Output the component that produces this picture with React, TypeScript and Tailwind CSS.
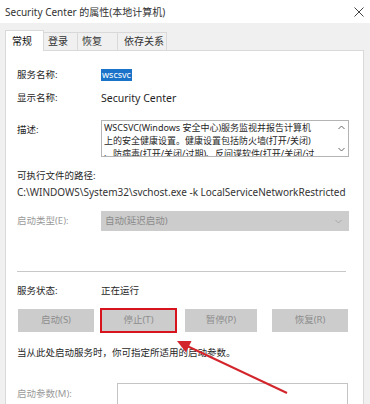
export default function App() {
  return (
    <div className="relative w-[370px] h-[404px] overflow-hidden bg-[#f0f0f0] text-[#1f1f1f] text-[9.5px] font-['Noto_Sans','Noto_Sans_CJK_SC',sans-serif]">
      {/* title bar */}
      <div className="h-[23px] bg-white flex items-center justify-between pl-[5px] pr-[5px]">
        <span className="text-[10px] text-[#333] leading-[14px]">Security Center 的属性(本地计算机)</span>
        <svg width="10" height="10" viewBox="0 0 10 10" className="mr-[1px]">
          <path d="M0.5 0.5 L9.5 9.5 M9.5 0.5 L0.5 9.5" stroke="#444" strokeWidth="1" />
        </svg>
      </div>

      {/* tabs */}
      <div className="flex items-end pl-[5px] pt-[7px]">
        <div className="relative z-10 -mb-px h-[21px] w-[39px] bg-white border border-b-0 border-[#d9d9d9] flex items-center pl-[6px] text-[#111] text-[10px]">常规</div>
        <div className="h-[18px] w-[34px] border-t border-r border-[#d9d9d9] flex items-center pl-[4px] text-[#333] text-[10px]">登录</div>
        <div className="h-[18px] w-[40px] border-t border-r border-[#d9d9d9] flex items-center pl-[4px] text-[#333] text-[10px]">恢复</div>
        <div className="h-[18px] w-[49px] border-t border-r border-[#d9d9d9] flex items-center pl-[6px] text-[#333] text-[10px]">依存关系</div>
      </div>

      {/* panel */}
      <div className="ml-[5px] mr-[6px] h-[400px] bg-white border border-[#d9d9d9] pl-[11px] flex flex-col">
        <div className="mt-[17px] h-[14px] flex items-center leading-[14px]">
          <span className="w-[84px]">服务名称:</span>
          <span className="bg-[#1a73c9] text-white px-[1px] leading-[12px] text-[9px]">wscsvc</span>
        </div>
        <div className="mt-[9px] h-[14px] flex items-center leading-[14px]">
          <span className="w-[84px]">显示名称:</span>
          <span className="text-[10.5px]">Security Center</span>
        </div>
        <div className="mt-[15px] flex">
          <span className="w-[84px] pt-[3px] leading-[14px]">描述:</span>
          <div className="w-[248px] h-[37px] border border-[#b4b4b4] flex overflow-hidden">
            <div className="flex-1 overflow-hidden pl-[2px] leading-[13px] text-[9px] whitespace-nowrap">
              <div>WSCSVC(Windows 安全中心)服务监视并报告计算机</div>
              <div>上的安全健康设置。健康设置包括防火墙(打开/关闭)</div>
              <div>、防病毒(打开/关闭/过期)、反间谍软件(打开/关闭/过</div>
            </div>
            <div className="w-[14px] flex flex-col items-center justify-between py-[4px]">
              <svg width="7" height="5" viewBox="0 0 7 5"><path d="M0.5 4 L3.5 1 L6.5 4" stroke="#666" strokeWidth="1" fill="none" /></svg>
              <svg width="7" height="5" viewBox="0 0 7 5"><path d="M0.5 1 L3.5 4 L6.5 1" stroke="#666" strokeWidth="1" fill="none" /></svg>
            </div>
          </div>
        </div>
        <div className="mt-[12px] h-[14px] leading-[14px]">可执行文件的路径:</div>
        <div className="mt-[2px] h-[14px] leading-[14px] whitespace-nowrap overflow-hidden w-[331px] text-[10px] text-[#333]">
          C:\WINDOWS\System32\svchost.exe -k LocalServiceNetworkRestricted -p
        </div>
        <div className="mt-[12px] flex items-center">
          <span className="w-[84px] text-[#9a9a9a]">启动类型(E):</span>
          <div className="w-[248px] h-[20px] bg-[#cccccc] flex items-center justify-between pl-[4px] pr-[7px] text-[#8a8a8a]">
            <span>自动(延迟启动)</span>
            <svg width="7" height="5" viewBox="0 0 7 5"><path d="M0.5 1 L3.5 4 L6.5 1" stroke="#a8a8a8" strokeWidth="1" fill="none" /></svg>
          </div>
        </div>
        <div className="mt-[40px] h-px w-[329px] bg-[#c8c8c8]" />
        <div className="mt-[12px] h-[14px] flex items-center leading-[14px]">
          <span className="w-[84px]">服务状态:</span>
          <span>正在运行</span>
        </div>
        <div className="mt-[11px] flex h-[23px] text-[#8c8c8c]">
          <div className="ml-[1px] w-[76px] bg-[#cccccc] flex items-center justify-center">启动(S)</div>
          <div className="relative ml-[7px] w-[75px] bg-[#cccccc] flex items-center justify-center">
            停止(T)
            <span className="absolute -inset-[1px] border-2 border-[#d7141e]" />
          </div>
          <div className="ml-[9px] w-[72px] bg-[#cccccc] flex items-center justify-center">暂停(P)</div>
          <div className="ml-[15px] w-[76px] bg-[#cccccc] flex items-center justify-center">恢复(R)</div>
        </div>
        <div className="mt-[14px] h-[14px] leading-[14px]">当从此处启动服务时，你可指定所适用的启动参数。</div>
        <div className="mt-[23px] flex items-start">
          <span className="w-[100px] pt-[4px] text-[#9a9a9a] leading-[14px]">启动参数(M):</span>
          <div className="w-[231px] h-[40px] border border-[#c4c4c4] bg-white" />
        </div>
      </div>

      {/* annotation arrow */}
      <svg className="absolute inset-0 pointer-events-none" width="370" height="404" viewBox="0 0 370 404">
        <line x1="287" y1="393" x2="186" y2="345.5" stroke="#d3262c" strokeWidth="2" />
        <polygon points="177,341 191.5,341 186,352.5" fill="#d3262c" />
      </svg>
    </div>
  );
}
